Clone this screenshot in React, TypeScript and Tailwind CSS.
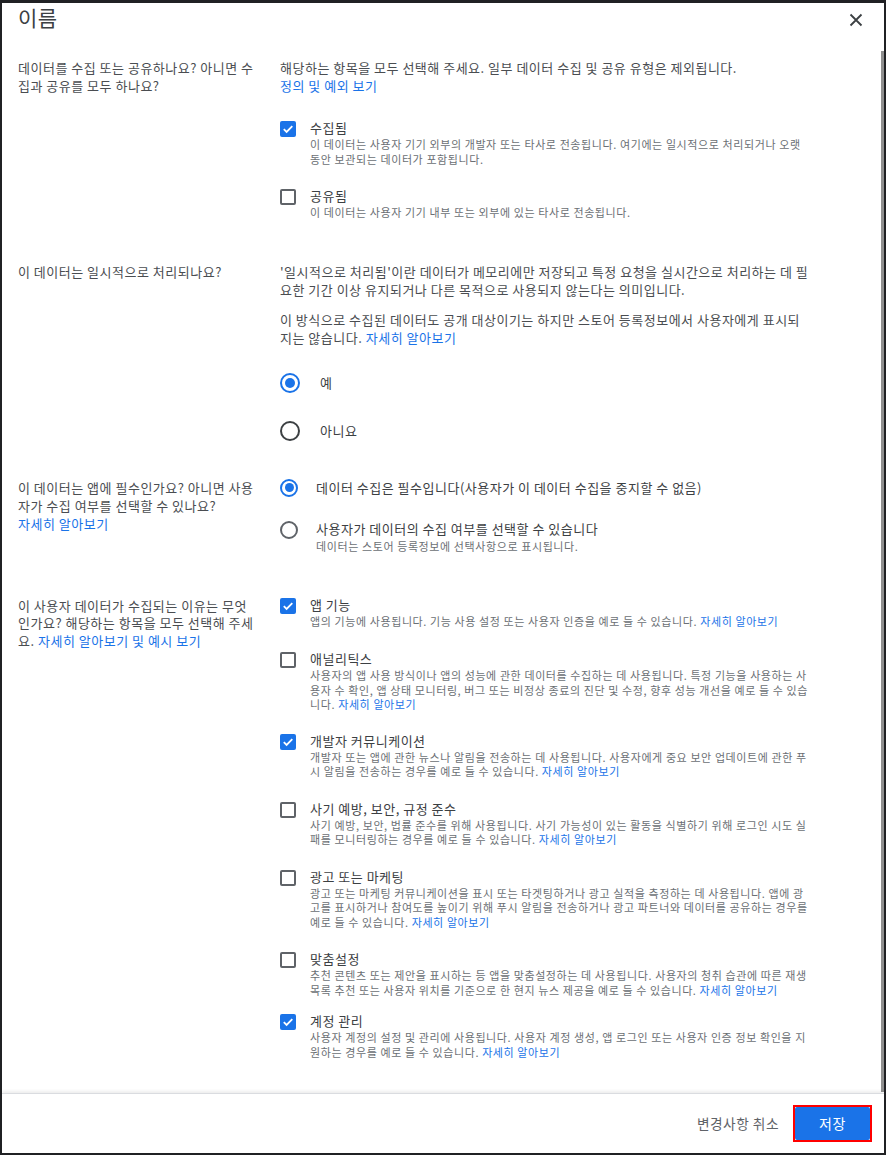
import React from 'react';

const link = 'text-[#1a73e8]';

function CheckBox({ checked }: { checked: boolean }) {
  return checked ? (
    <span className="mt-[2px] flex h-[16px] w-[16px] shrink-0 items-center justify-center rounded-[2px] bg-[#1a73e8]">
      <svg width="12" height="12" viewBox="0 0 12 12" fill="none">
        <path d="M1.8 6.2 L4.6 9 L10.3 3.2" stroke="white" strokeWidth="1.8" />
      </svg>
    </span>
  ) : (
    <span className="mt-[2px] h-[16px] w-[16px] shrink-0 rounded-[2px] border-2 border-[#5f6368]" />
  );
}

function Radio({ checked, size }: { checked: boolean; size: 'lg' | 'sm' }) {
  const box = size === 'lg' ? 'h-[20px] w-[20px]' : 'h-[18px] w-[18px]';
  const dot = size === 'lg' ? 'h-[10px] w-[10px]' : 'h-[9px] w-[9px]';
  return (
    <span
      className={`flex ${box} shrink-0 items-center justify-center rounded-full border-2 ${
        checked ? 'border-[#1a73e8]' : size === 'lg' ? 'border-[#3c4043]' : 'border-[#5f6368]'
      }`}
    >
      {checked && <span className={`${dot} rounded-full bg-[#1a73e8]`} />}
    </span>
  );
}

interface Item {
  label: string;
  desc: string;
  checked: boolean;
  more?: boolean;
  mt: string;
}

// line breaks follow the reference's wrapping
const purposes: Item[] = [
  {
    label: '앱 기능',
    desc: '앱의 기능에 사용됩니다. 기능 사용 설정 또는 사용자 인증을 예로 들 수 있습니다.',
    checked: true,
    more: true,
    mt: 'mt-0',
  },
  {
    label: '애널리틱스',
    desc: '사용자의 앱 사용 방식이나 앱의 성능에 관한 데이터를 수집하는 데 사용됩니다. 특정 기능을 사용하는 사\n용자 수 확인, 앱 상태 모니터링, 버그 또는 비정상 종료의 진단 및 수정, 향후 성능 개선을 예로 들 수 있습\n니다.',
    checked: false,
    more: true,
    mt: 'mt-[22px]',
  },
  {
    label: '개발자 커뮤니케이션',
    desc: '개발자 또는 앱에 관한 뉴스나 알림을 전송하는 데 사용됩니다. 사용자에게 중요 보안 업데이트에 관한 푸\n시 알림을 전송하는 경우를 예로 들 수 있습니다.',
    checked: true,
    more: true,
    mt: 'mt-[20px]',
  },
  {
    label: '사기 예방, 보안, 규정 준수',
    desc: '사기 예방, 보안, 법률 준수를 위해 사용됩니다. 사기 가능성이 있는 활동을 식별하기 위해 로그인 시도 실\n패를 모니터링하는 경우를 예로 들 수 있습니다.',
    checked: false,
    more: true,
    mt: 'mt-[21px]',
  },
  {
    label: '광고 또는 마케팅',
    desc: '광고 또는 마케팅 커뮤니케이션을 표시 또는 타겟팅하거나 광고 실적을 측정하는 데 사용됩니다. 앱에 광\n고를 표시하거나 참여도를 높이기 위해 푸시 알림을 전송하거나 광고 파트너와 데이터를 공유하는 경우를\n예로 들 수 있습니다.',
    checked: false,
    more: true,
    mt: 'mt-[21px]',
  },
  {
    label: '맞춤설정',
    desc: '추천 콘텐츠 또는 제안을 표시하는 등 앱을 맞춤설정하는 데 사용됩니다. 사용자의 청취 습관에 따른 재생\n목록 추천 또는 사용자 위치를 기준으로 한 현지 뉴스 제공을 예로 들 수 있습니다.',
    checked: false,
    more: true,
    mt: 'mt-[21px]',
  },
  {
    label: '계정 관리',
    desc: '사용자 계정의 설정 및 관리에 사용됩니다. 사용자 계정 생성, 앱 로그인 또는 사용자 인증 정보 확인을 지\n원하는 경우를 예로 들 수 있습니다.',
    checked: true,
    more: true,
    mt: 'mt-[15px]',
  },
];

function CheckItem({ item }: { item: Item }) {
  return (
    <div className={`flex gap-[14px] ${item.mt}`}>
      <CheckBox checked={item.checked} />
      <div className="min-w-0 flex-1">
        <div className="text-[13px] leading-[18px] tracking-[0.5px] text-[#3c4043]">{item.label}</div>
        <p className="whitespace-pre-line text-[11px] leading-[14.5px] tracking-[0.6px] text-[#6b6f74]">
          {item.desc}
          {item.more && <span className={link}> 자세히 알아보기</span>}
        </p>
      </div>
    </div>
  );
}

export default function App() {
  return (
    <div className="h-[1155px] w-[886px] bg-[#202124] pb-[2px] pl-[2px] pr-[2px] pt-[3px] font-['Noto_Sans_CJK_KR',sans-serif]">
      <div className="flex h-full flex-col bg-white">
        {/* Header */}
        <div className="flex h-[40px] shrink-0 items-start justify-between pl-[16px] pr-[21px]">
          <h1 className="text-[21px] leading-[28px] tracking-[0.5px] text-[#3c4043]">이름</h1>
          <svg className="mt-[10px]" width="14" height="14" viewBox="0 0 14 14" fill="none">
            <path d="M1.5 1.5 L12.5 12.5 M12.5 1.5 L1.5 12.5" stroke="#3c4043" strokeWidth="1.8" />
          </svg>
        </div>

        {/* Body */}
        <div className="flex min-h-0 flex-1 overflow-hidden">
          <div className="flex-1 pl-[16px] pt-[16px] text-[13px] leading-[18px] tracking-[0.5px] text-[#4a4d51]">
            {/* Collected / shared */}
            <div className="grid grid-cols-[240px_545px] gap-x-[22px]">
              <p>데이터를 수집 또는 공유하나요? 아니면 수집과 공유를 모두 하나요?</p>
              <div>
                <p>해당하는 항목을 모두 선택해 주세요. 일부 데이터 수집 및 공유 유형은 제외됩니다.</p>
                <p className={link}>정의 및 예외 보기</p>
                <div className="mt-[24px]">
                  <CheckItem
                    item={{
                      label: '수집됨',
                      desc: '이 데이터는 사용자 기기 외부의 개발자 또는 타사로 전송됩니다. 여기에는 일시적으로 처리되거나 오랫\n동안 보관되는 데이터가 포함됩니다.',
                      checked: true,
                      mt: 'mt-0',
                    }}
                  />
                  <CheckItem
                    item={{
                      label: '공유됨',
                      desc: '이 데이터는 사용자 기기 내부 또는 외부에 있는 타사로 전송됩니다.',
                      checked: false,
                      mt: 'mt-[21px]',
                    }}
                  />
                </div>
              </div>
            </div>

            {/* Ephemeral */}
            <div className="mt-[43px] grid grid-cols-[240px_545px] gap-x-[22px]">
              <p>이 데이터는 일시적으로 처리되나요?</p>
              <div className="whitespace-pre-line">
                <p>
                  {"'일시적으로 처리됨'이란 데이터가 메모리에만 저장되고 특정 요청을 실시간으로 처리하는 데 필\n요한 기간 이상 유지되거나 다른 목적으로 사용되지 않는다는 의미입니다."}
                </p>
                <p className="mt-[12px]">
                  {'이 방식으로 수집된 데이터도 공개 대상이기는 하지만 스토어 등록정보에서 사용자에게 표시되\n지는 않습니다.'}
                  <span className={link}> 자세히 알아보기</span>
                </p>
                <div className="mt-[12px]">
                  <div className="flex h-[48px] items-center gap-[20px]">
                    <Radio checked size="lg" />
                    <span className="text-[#3c4043]">예</span>
                  </div>
                  <div className="flex h-[48px] items-center gap-[20px]">
                    <Radio checked={false} size="lg" />
                    <span className="text-[#3c4043]">아니요</span>
                  </div>
                </div>
              </div>
            </div>

            {/* Required */}
            <div className="mt-[24px] grid grid-cols-[240px_545px] gap-x-[22px]">
              <div>
                <p>이 데이터는 앱에 필수인가요? 아니면 사용자가 수집 여부를 선택할 수 있나요?</p>
                <p className={link}>자세히 알아보기</p>
              </div>
              <div>
                <div className="flex items-start gap-[18px]">
                  <Radio checked size="sm" />
                  <span className="text-[#3c4043]">데이터 수집은 필수입니다(사용자가 이 데이터 수집을 중지할 수 없음)</span>
                </div>
                <div className="mt-[23px] flex items-start gap-[18px]">
                  <span className="mt-[1px]">
                    <Radio checked={false} size="sm" />
                  </span>
                  <div>
                    <div className="text-[#3c4043]">사용자가 데이터의 수집 여부를 선택할 수 있습니다</div>
                    <p className="mt-[1px] text-[11px] leading-[14px] tracking-[0.6px] text-[#6b6f74]">
                      데이터는 스토어 등록정보에 선택사항으로 표시됩니다.
                    </p>
                  </div>
                </div>
              </div>
            </div>

            {/* Purposes */}
            <div className="mt-[43px] grid grid-cols-[240px_545px] gap-x-[22px]">
              <p className="pt-[1px] leading-[17.5px]">
                이 사용자 데이터가 수집되는 이유는 무엇인가요? 해당하는 항목을 모두 선택해 주세요.
                <span className={link}> 자세히 알아보기 및 예시 보기</span>
              </p>
              <div>
                {purposes.map((p) => (
                  <CheckItem key={p.label} item={p} />
                ))}
              </div>
            </div>
          </div>

          {/* Scrollbar */}
          <div className="w-[3px] shrink-0 pb-[1px] pt-[8px]">
            <div className="h-full bg-[#8f8f8f]" />
          </div>
        </div>

        {/* Footer */}
        <div className="flex h-[60px] shrink-0 items-center justify-end gap-[14px] border-t border-[#dadce0] pr-[12px] shadow-[0_-2px_3px_rgba(0,0,0,0.07)]">
          <button className="text-[13.7px] tracking-[0.5px] text-[#5f6368]">변경사항 취소</button>
          <div className="h-[37px] w-[79px] border-2 border-[#ff0000]">
            <button className="h-full w-full rounded-[2px] bg-[#1a73e8] text-[14px] tracking-[0.5px] text-white">저장</button>
          </div>
        </div>
      </div>
    </div>
  );
}
